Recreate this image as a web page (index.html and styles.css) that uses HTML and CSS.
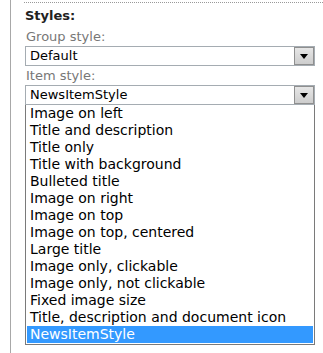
FILE: index.html
```html
<!DOCTYPE html>
<html lang="en">
<head>
  <meta charset="UTF-8" />
  <title>Styles</title>
  <link rel="stylesheet" href="styles.css">
</head>
<body>
  <div class="page">
    <div class="section">
      <h3>Styles:</h3>

      <div class="field">
        <label>Group style:</label>
        <div class="select">
          <span class="value">Default</span>
          <span class="arrow"></span>
        </div>
      </div>

      <div class="field">
        <label>Item style:</label>
        <div class="dropdown">
          <div class="select">
            <span class="value">NewsItemStyle</span>
            <span class="arrow"></span>
          </div>
          <ul class="list">
            <li>Image on left</li>
            <li>Title and description</li>
            <li>Title only</li>
            <li>Title with background</li>
            <li>Bulleted title</li>
            <li>Image on right</li>
            <li>Image on top</li>
            <li>Image on top, centered</li>
            <li>Large title</li>
            <li>Image only, clickable</li>
            <li>Image only, not clickable</li>
            <li>Fixed image size</li>
            <li>Title, description and document icon</li>
            <li class="selected">NewsItemStyle</li>
          </ul>
        </div>
      </div>
    </div>
  </div>
</body>
</html>
```

FILE: styles.css
```css
body {
  margin: 0;
  background: #fff;
  font-family: "DejaVu Sans", Verdana, sans-serif;
  font-size: 13px;
  color: #000;
}

.page {
  margin-left: 10px;
  border-left: 1px solid #a8a8a8;
  min-height: 353px;
  padding: 2px 0 0 13px;
}

.section {
  border-top: 1px dotted #999;
  padding: 5px 8px 0 1px;
}

h3 {
  margin: 0 0 7px 0;
  font-size: 13px;
  font-weight: bold;
  color: #222;
}

.field {
  display: flex;
  flex-direction: column;
}

label {
  color: #777;
  line-height: 14px;
  margin: 0 0 2px 1px;
}

.select {
  display: flex;
  align-items: center;
  height: 18px;
  border: 1px solid #a5acb2;
  margin-bottom: 3px;
  background: #fff;
}

.value {
  flex: 1;
  padding-left: 4px;
  line-height: 18px;
}

.arrow {
  width: 20px;
  height: 18px;
  border: 1px solid #8f8f8f;
  box-sizing: border-box;
  background: linear-gradient(#e6e6e6, #cdcdcd);
  display: flex;
  align-items: center;
  justify-content: center;
}

.arrow::after {
  content: "";
  margin-top: 1px;
  border-left: 4px solid transparent;
  border-right: 4px solid transparent;
  border-top: 5px solid #000;
}

.dropdown .select {
  margin-bottom: 0;
}

.list {
  list-style: none;
  margin: 0;
  padding: 0 1px 1px 1px;
  border: 1px solid #7a7a7a;
  border-top: none;
  font-size: 14px;
}

.list li {
  height: 17px;
  line-height: 17px;
  padding-left: 3px;
  white-space: nowrap;
}

.list li.selected {
  background: #3399ff;
  color: #fff;
}
```
